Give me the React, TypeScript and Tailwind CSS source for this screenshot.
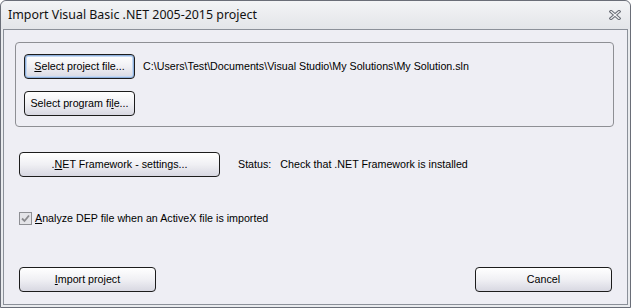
import React from 'react'

const ui = "font-['Liberation_Sans',Arial,sans-serif] text-[10.7px] text-black"

function Btn({
  children,
  className = '',
  focused = false,
}: {
  children: React.ReactNode
  className?: string
  focused?: boolean
}) {
  return (
    <button
      className={`flex h-[25px] items-center justify-center rounded-[4px] border border-[#1c1c1c] bg-gradient-to-b from-[#ffffff] via-[#f0f0f4] to-[#d8d8e2] leading-none ${
        focused ? 'shadow-[inset_0_0_0_1px_#8fb0dc,inset_0_0_0_2px_#c4d8f2]' : ''
      } ${className}`}
    >
      {children}
    </button>
  )
}

function CloseGlyph() {
  return (
    <svg width="12" height="10" viewBox="0 0 12 10">
      <path d="M2 1.5 L10 8.5 M10 1.5 L2 8.5" stroke="#6b6f78" strokeWidth="3.2" strokeLinecap="square" />
      <path d="M2 1.5 L10 8.5 M10 1.5 L2 8.5" stroke="#f4f5f7" strokeWidth="1.2" strokeLinecap="square" />
    </svg>
  )
}

function CheckBox() {
  return (
    <span className="flex h-[13px] w-[13px] items-center justify-center border border-[#8e8f94] bg-[#e4e4e8]">
      <svg width="9" height="9" viewBox="0 0 9 9">
        <path d="M1 4.5 L3.5 7 L8 1.5" fill="none" stroke="#8a8a8e" strokeWidth="1.8" />
      </svg>
    </span>
  )
}

export default function App() {
  return (
    <div className={`${ui} flex h-[308px] w-[631px] flex-col rounded-t-[6px] border border-[#6a6e78] bg-[#e9ebee]`}>
      {/* Title bar */}
      <div className="flex h-[28px] items-center justify-between rounded-t-[6px] bg-gradient-to-b from-[#f3f4f6] to-[#e3e5e9] pl-[7px] pr-[9px]">
        <span className="font-['Noto_Sans',sans-serif] text-[12.4px] text-[#111]">
          Import Visual Basic .NET 2005-2015 project
        </span>
        <CloseGlyph />
      </div>

      {/* Client area */}
      <div className="mx-[2px] mb-[2px] flex flex-1 flex-col border border-[#8b9099] bg-[#eeeef4] pl-[15px] pr-[15px] pt-[12px]">
        <div className="-ml-[4px] flex h-[85px] w-[599px] flex-col gap-[12px] rounded-[4px] border border-[#8e8f94] pl-[8px] pt-[11px]">
          <div className="flex items-center">
            <Btn focused className="w-[111px]">
              <span>
                <u>S</u>elect project file...
              </span>
            </Btn>
            <span className="ml-[8px]">C:\Users\Test\Documents\Visual Studio\My Solutions\My Solution.sln</span>
          </div>
          <Btn className="w-[111px]">
            <span>
              Select program fi<u>l</u>e...
            </span>
          </Btn>
        </div>

        <div className="mt-[25px] flex items-center">
          <Btn className="w-[201px]">
            <span>
              .<u>N</u>ET Framework - settings...
            </span>
          </Btn>
          <span className="ml-[18px]">Status:</span>
          <span className="ml-[9px]">Check that .NET Framework is installed</span>
        </div>

        <div className="mt-[33px] flex items-center gap-[3px]">
          <CheckBox />
          <span>
            <u>A</u>nalyze DEP file when an ActiveX file is imported
          </span>
        </div>

        <div className="mt-[41px] flex items-center justify-between">
          <Btn className="w-[137px]">
            <span>
              <u>I</u>mport project
            </span>
          </Btn>
          <Btn className="w-[137px]">Cancel</Btn>
        </div>
      </div>
    </div>
  )
}
